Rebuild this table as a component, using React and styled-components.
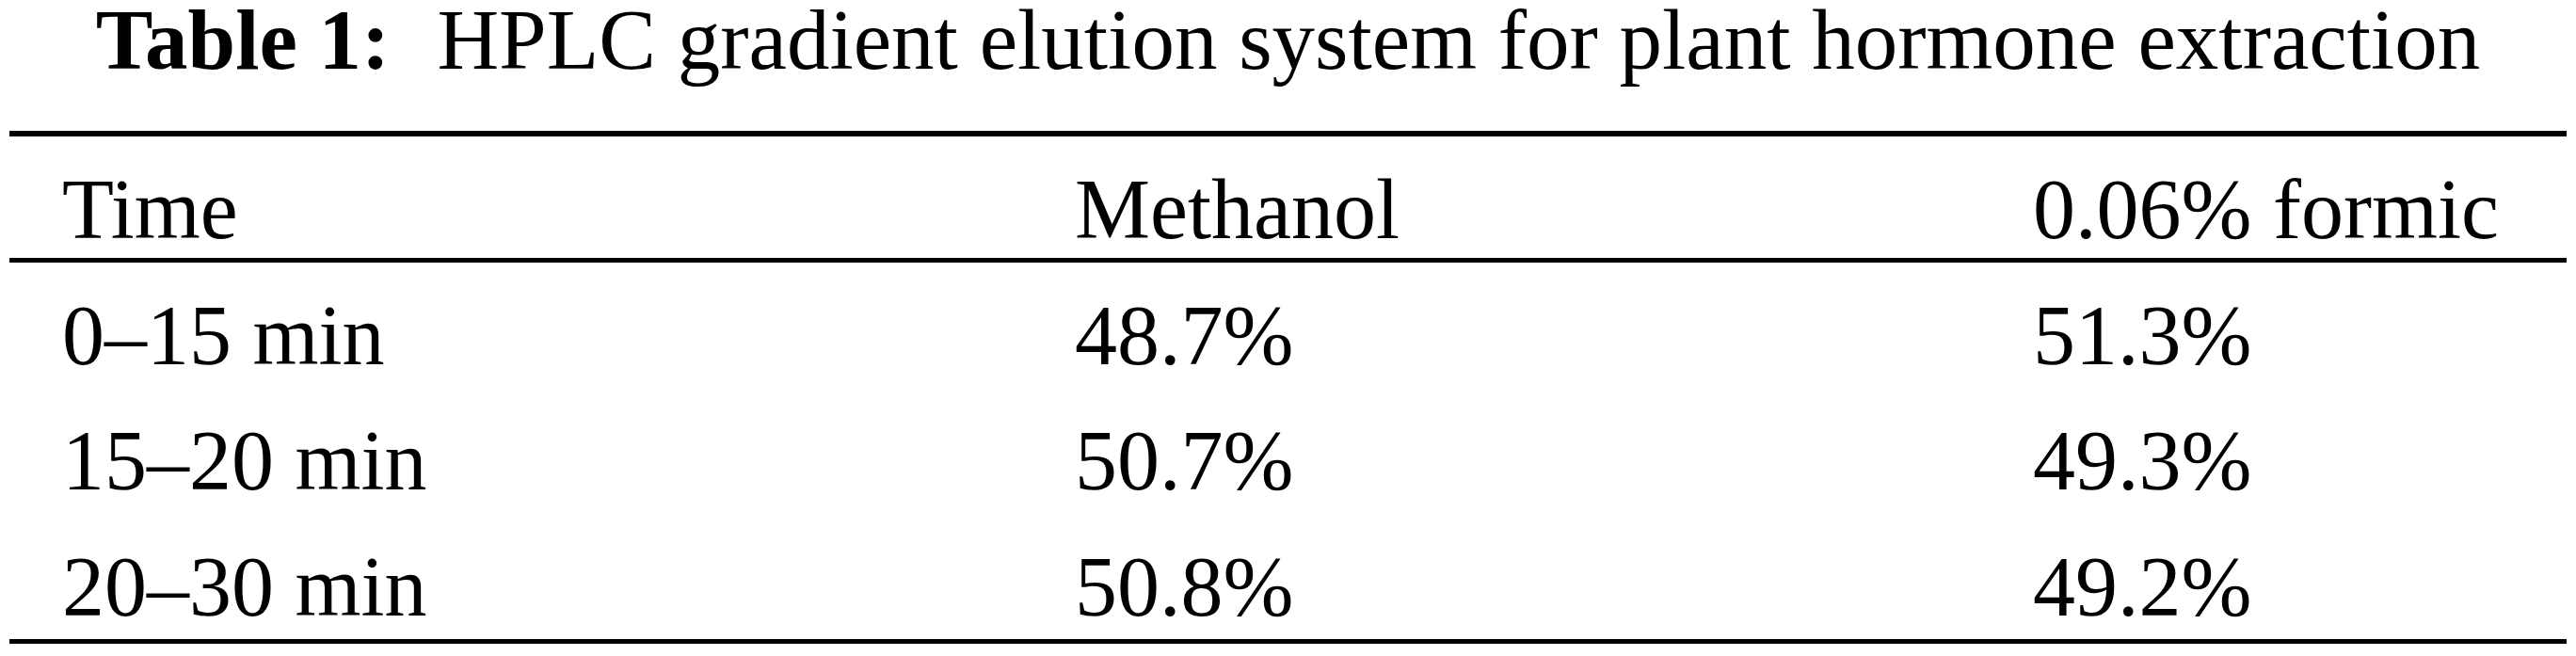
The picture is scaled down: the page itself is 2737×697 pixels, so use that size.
import styled, { createGlobalStyle } from "styled-components";

const GlobalStyle = createGlobalStyle`
  html, body {
    margin: 0;
    padding: 0;
    background: #ffffff;
  }
  body {
    font-family: "Liberation Serif", "Times New Roman", serif;
    color: #000000;
  }
`;

const Page = styled.div`
  width: 2737px;
  height: 697px;
  padding-left: 10px;
  box-sizing: border-box;
`;

const Caption = styled.div`
  width: 2717px;
  text-align: center;
  font-size: 91px;
  line-height: 80px;
  padding-top: 3px;
  margin-bottom: 56px;
  white-space: nowrap;
`;

const CaptionLabel = styled.span`
  font-weight: bold;
  margin-right: 50px;
`;

const Table = styled.div`
  width: 2717px;
  display: grid;
  grid-template-columns: 1076px 1018px 1fr;
  border-top: 6px solid #000;
  border-bottom: 5px solid #000;
`;

const Cell = styled.div`
  font-size: 90px;
  line-height: 100px;
  padding: 28px 0 5.5px 56px;
  white-space: nowrap;
  border-bottom: ${(p) => (p.$head ? "5px solid #000" : "none")};
  padding-bottom: ${(p) => (p.$head ? "0.5px" : "5.5px")};
`;

const header = ["Time", "Methanol", "0.06% formic"];

const rows = [
  ["0–15 min", "48.7%", "51.3%"],
  ["15–20 min", "50.7%", "49.3%"],
  ["20–30 min", "50.8%", "49.2%"],
];

const App = () => {
  return (
    <Page>
      <GlobalStyle />
      <Caption>
        <CaptionLabel>Table 1:</CaptionLabel>
        HPLC gradient elution system for plant hormone extraction
      </Caption>
      <Table>
        {header.map((h) => (
          <Cell key={h} $head>
            {h}
          </Cell>
        ))}
        {rows.map((row) =>
          row.map((value, i) => <Cell key={row[0] + i}>{value}</Cell>)
        )}
      </Table>
    </Page>
  );
};

export default App;
